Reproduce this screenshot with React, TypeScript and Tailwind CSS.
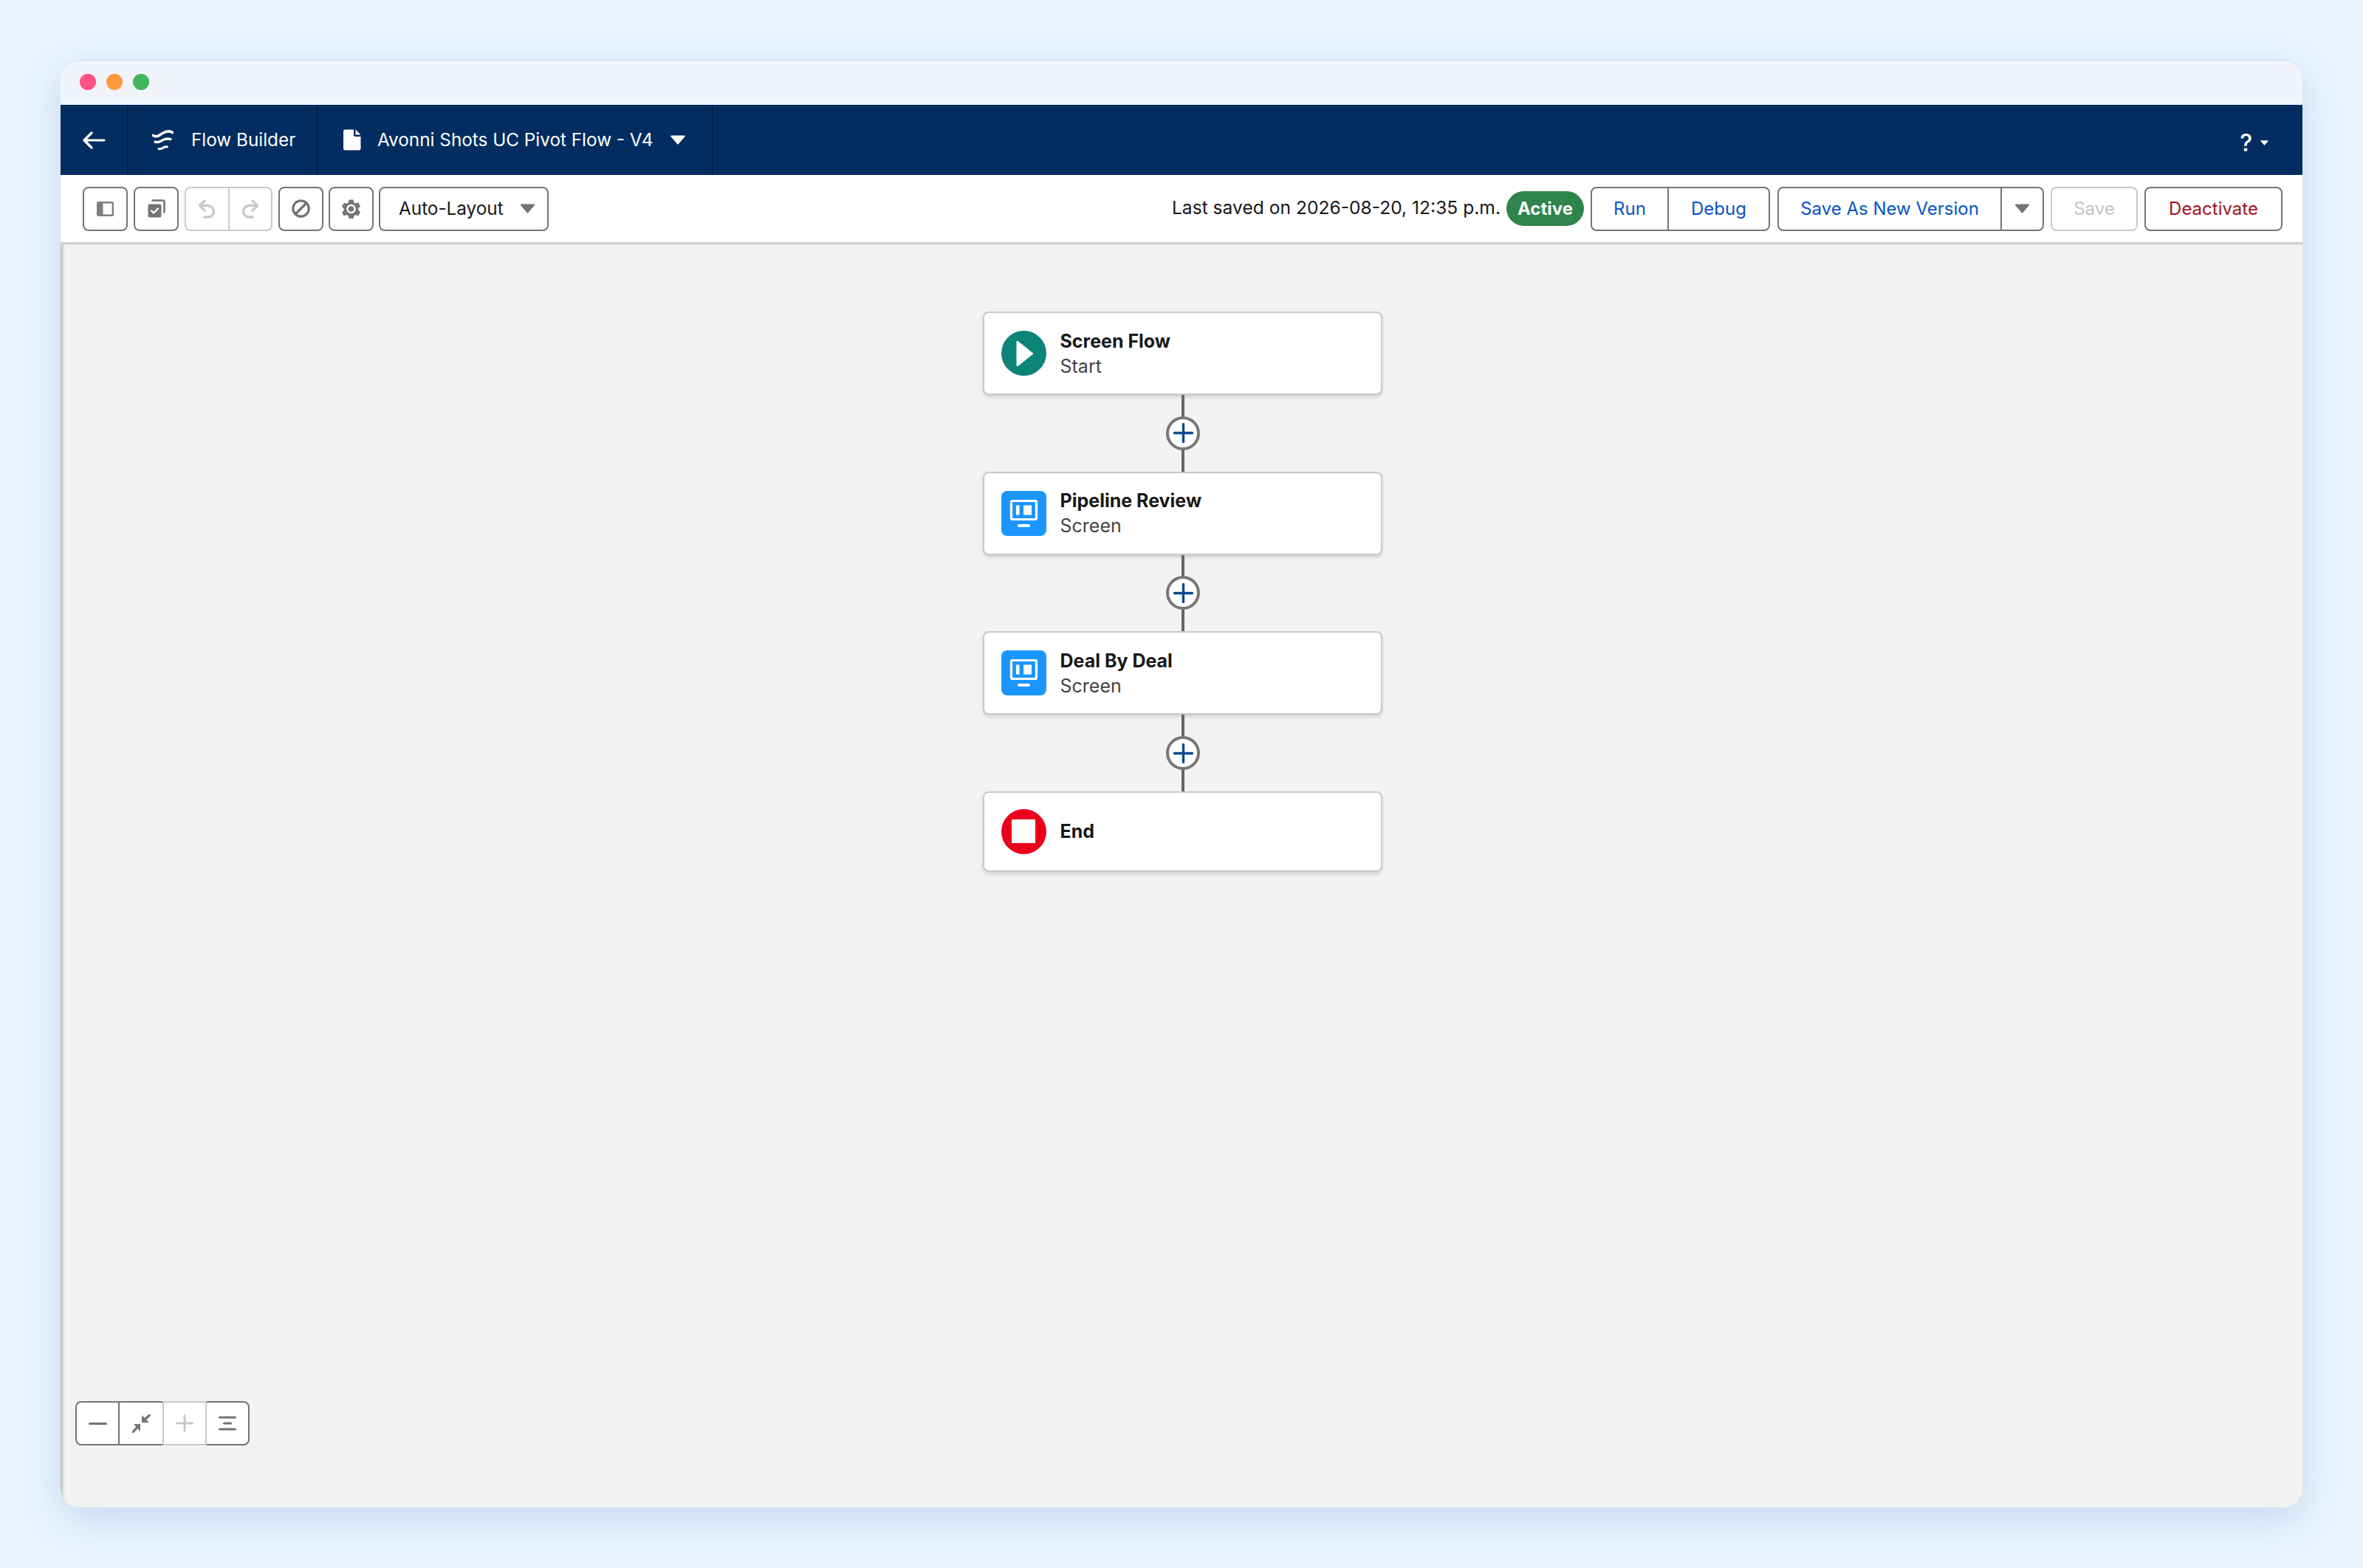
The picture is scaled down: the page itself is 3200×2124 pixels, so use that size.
const sans = "font-['Inter',sans-serif]";

function Caret({ className }: { className: string }) {
  return (
    <svg viewBox="0 0 20 13" className={className} fill="currentColor">
      <path d="M1 0.5h18a.8.8 0 0 1 .7 1.2l-9 10.6a.9.9 0 0 1-1.4 0l-9-10.6A.8.8 0 0 1 1 .5z" />
    </svg>
  );
}

function PanelIcon() {
  return (
    <svg width="23" height="20" viewBox="0 0 23 20">
      <rect x="1.2" y="1.2" width="20.6" height="17.6" rx="1" fill="#fff" stroke="#7f7f7f" strokeWidth="2.4" />
      <rect x="2" y="2" width="6.5" height="16" fill="#7f7f7f" />
    </svg>
  );
}

function CopyCheckIcon() {
  return (
    <svg width="24" height="25" viewBox="0 0 24 25">
      <path d="M6.5 1.500h14a2 2 0 0 1 2 2v14" fill="none" stroke="#747474" strokeWidth="2.600" strokeLinecap="round" />
      <rect x="0.5" y="6.500" width="18" height="18" rx="2.500" fill="#747474" />
      <path d="M5 15.500l3 3 6-6" fill="none" stroke="#fff" strokeWidth="2.400" strokeLinecap="round" strokeLinejoin="round" />
    </svg>
  );
}

function UndoIcon({ flip }: { flip?: boolean }) {
  return (
    <svg width="25" height="26" viewBox="0 0 25 26" className={flip ? "-scale-x-100" : ""}>
      <path
        d="M9 2L2.500 8.500 9 15M3.500 8.500h10a8 8 0 0 1 8 8 7.500 7.500 0 0 1-7.500 7.500H9"
        fill="none"
        stroke="#c9c9c9"
        strokeWidth="3.400"
        strokeLinecap="round"
        strokeLinejoin="round"
      />
    </svg>
  );
}

function BanIcon() {
  return (
    <svg width="25" height="25" viewBox="0 0 25 25" fill="none" stroke="#747474" strokeWidth="3.200">
      <circle cx="12.500" cy="12.500" r="10.700" />
      <path d="M20 5L5 20" strokeLinecap="round" />
    </svg>
  );
}

function GearIcon() {
  return (
    <svg width="25" height="26" viewBox="0 0 24 25">
      <path
        fill="#747474"
        stroke="#747474"
        strokeWidth="1"
        strokeLinejoin="round"
        d="M9.600.9h4.800l.8 3.300 2.700 1.500 3.200-1 2.300 4.200-2.400 2.300v3.100l2.400 2.300-2.300 4.200-3.200-1-2.700 1.500-.8 3.300H9.600l-.8-3.300-2.700-1.500-3.200 1L.6 17.100l2.400-2.300v-3.100L.6 9.400l2.300-4.200 3.200 1 2.700-1.500z"
      />
      <circle cx="12" cy="12.500" r="6" fill="#fff" />
      <circle cx="12" cy="12.500" r="3.600" fill="#747474" />
    </svg>
  );
}

function FlowIcon() {
  return (
    <svg width="29" height="29" viewBox="0 0 29 29" fill="none" stroke="#fff" strokeLinecap="round">
      <path d="M1.500 8.500C7 12 10 7.500 15 5c5-2.500 9-3 12.500-.5" strokeWidth="3.600" />
      <path d="M4 17c5 2.500 8-1.500 12-3 3-1.100 6-1.300 9-.5" strokeWidth="3.300" />
      <path d="M9 26.500c3 1 5-1 7-2 1.500-.7 3-1 4.500-.6" strokeWidth="3" />
    </svg>
  );
}

function DocIcon() {
  return (
    <svg width="24" height="29" viewBox="0 0 24 29" fill="#fff">
      <path d="M2.500.5h11.500v7a2.500 2.500 0 0 0 2.500 2.500h7v16a2.500 2.500 0 0 1-2.500 2.500h-18.500a2.500 2.500 0 0 1-2.500-2.500v-23a2.500 2.500 0 0 1 2.500-2.500z" />
      <path d="M16.500.5l7 7h-7z" />
    </svg>
  );
}

function ScreenIcon() {
  return (
    <svg width="61" height="61" viewBox="0 0 61 61">
      <rect x="13.500" y="13.500" width="34" height="25" rx="1.500" fill="none" stroke="#fff" strokeWidth="3.200" />
      <rect x="20" y="19.500" width="4.500" height="13" fill="#fff" />
      <rect x="30" y="19.500" width="11" height="13" fill="#fff" />
      <rect x="22" y="45" width="17" height="4" rx="2" fill="#fff" />
    </svg>
  );
}

function PlusButton() {
  return (
    <div className="ml-[2px] flex h-[103.67px] w-1 flex-col items-center justify-center bg-[#666666]">
      <div className="flex h-[46px] w-[46px] shrink-0 items-center justify-center rounded-full border-4 border-[#777777] bg-white">
        <svg width="27" height="27" viewBox="0 0 27 27" stroke="#0b4a8c" strokeWidth="3.400" strokeLinecap="round">
          <path d="M13.500 1.500v24M1.500 13.500h24" />
        </svg>
      </div>
    </div>
  );
}

function FlowNode({
  icon,
  title,
  sub,
  tall = true,
}: {
  icon: React.ReactNode;
  title: string;
  sub?: string;
  tall?: boolean;
}) {
  return (
    <div
      className={`flex w-[541px] items-center gap-[19px] rounded-[8px] border-2 border-[#c9c9c9] bg-white pl-[23px] shadow-[0_3px_5px_rgba(0,0,0,0.14)] ${
        tall ? "h-[113px]" : "h-[109px]"
      }`}
    >
      {icon}
      <div className="flex flex-col">
        <span className="text-[25px] leading-[34px] font-bold text-[#181818]">{title}</span>
        {sub && <span className="text-[25px] leading-[34px] text-[#444444]">{sub}</span>}
      </div>
    </div>
  );
}

function ToolButton({ children, className = "" }: { children: React.ReactNode; className?: string }) {
  return (
    <button className={`flex h-[60px] w-[61px] items-center justify-center rounded-[8px] border-2 border-[#747474] bg-white ${className}`}>
      {children}
    </button>
  );
}

export default function App() {
  return (
    <div className={`h-[2124px] w-[3200px] overflow-hidden bg-[#e9f4fe] pt-[81px] pl-[82px] ${sans}`}>
      <div className="flex h-[1961px] w-[3036px] flex-col overflow-hidden rounded-[26px] border-t-2 border-[#d8e6f6] bg-[#f3f3f3] shadow-[0_16px_50px_rgba(90,130,190,0.24)]">
        <div className="flex h-[59px] shrink-0 items-center gap-[14px] bg-[#f1f5fb] pb-[3px] pl-[26px]">
          <span className="h-[22px] w-[22px] rounded-full bg-[#ff5186]" />
          <span className="h-[22px] w-[22px] rounded-full bg-[#ff9a3c]" />
          <span className="h-[22px] w-[22px] rounded-full bg-[#40b75a]" />
        </div>

        <header className="flex h-[95px] shrink-0 items-stretch bg-[#032d60] text-white">
          <div className="flex w-[92px] items-center justify-center border-r-2 border-[#021f44]">
            <svg width="31" height="24" viewBox="0 0 31 24" fill="none" stroke="#fff" strokeWidth="3.200" strokeLinecap="round" strokeLinejoin="round">
              <path d="M12 2L2 12l10 10M3 12h26" />
            </svg>
          </div>
          <div className="flex w-[257px] items-center gap-[24px] border-r-2 border-[#021f44] pl-[32px]">
            <FlowIcon />
            <span className="text-[24.3px]">Flow Builder</span>
          </div>
          <div className="flex w-[535px] items-center border-r-2 border-[#021f44] pl-[34px]">
            <DocIcon />
            <span className="ml-[22px] text-[24.3px]">Avonni Shots UC Pivot Flow - V4</span>
            <Caret className="ml-[23px] h-[13px] w-[20px] text-white" />
          </div>
          <div className="ml-auto flex items-center gap-[11px] pt-2 pr-[46px]">
            <span className="text-[32px] leading-none font-medium">?</span>
            <Caret className="h-[7px] w-[11px] text-white" />
          </div>
        </header>

        <div className="flex h-[94px] shrink-0 items-center border-b-[3px] border-[#d0d0d0] bg-white pr-[27px] pl-[30px]">
          <div className="flex items-center gap-[8px]">
            <ToolButton>
              <PanelIcon />
            </ToolButton>
            <ToolButton>
              <CopyCheckIcon />
            </ToolButton>
            <div className="flex h-[60px] w-[119px] rounded-[8px] border-2 border-[#c9c9c9] bg-white">
              <div className="flex flex-1 items-center justify-center border-r-2 border-[#c9c9c9]">
                <UndoIcon />
              </div>
              <div className="flex flex-1 items-center justify-center">
                <UndoIcon flip />
              </div>
            </div>
            <ToolButton>
              <BanIcon />
            </ToolButton>
            <ToolButton className="-ml-[1px]">
              <GearIcon />
            </ToolButton>
            <div className="-ml-[1px] flex h-[60px] w-[230px] items-center justify-between rounded-[8px] border-2 border-[#747474] bg-white pr-[16px] pl-[25px] text-[24.3px] text-[#181818]">
              <span>Auto-Layout</span>
              <Caret className="h-[13px] w-[21px] text-[#747474]" />
            </div>
          </div>

          <div className="ml-auto flex items-center text-[24px]">
            <span className="mr-[8px] -mt-[2px] text-[24.6px] text-[#181818]">Last saved on 2026-08-20, 12:35 p.m.</span>
            <span className="mr-[9px] flex h-[47px] w-[105px] items-center justify-center rounded-full bg-[#2e844a] text-[24px] font-bold text-white">
              Active
            </span>
            <div className="mr-[10px] flex h-[60px] w-[243px] rounded-[8px] border-2 border-[#747474] bg-white text-[#0654c6]">
              <div className="flex w-[104px] items-center justify-center border-r-2 border-[#747474]">Run</div>
              <div className="flex flex-1 items-center justify-center">Debug</div>
            </div>
            <div className="mr-[9px] flex h-[60px] w-[361px] rounded-[8px] border-2 border-[#747474] bg-white text-[#0654c6]">
              <div className="flex w-[302px] items-center justify-center border-r-2 border-[#747474]">Save As New Version</div>
              <div className="flex flex-1 items-center justify-center">
                <Caret className="h-[13px] w-[21px] text-[#747474]" />
              </div>
            </div>
            <div className="mr-[9px] flex h-[60px] w-[118px] items-center justify-center rounded-[8px] border-2 border-[#c9c9c9] bg-white text-[#c4c4c4]">
              Save
            </div>
            <div className="flex h-[60px] w-[187px] items-center justify-center rounded-[8px] border-2 border-[#747474] bg-white text-[#a30f23]">
              Deactivate
            </div>
          </div>
        </div>

        <main className="relative flex-1 bg-[#f3f3f3] shadow-[inset_5px_0_4px_-2px_rgba(0,0,0,0.22)]">
          <div className="flex flex-col items-center pt-[91px] pl-[2px]">
            <FlowNode
              icon={
                <span className="flex h-[61px] w-[61px] items-center justify-center rounded-full bg-[#0d8478]">
                  <svg width="24" height="36" viewBox="0 0 24 36" fill="#fff" className="ml-[3px]">
                    <path d="M2.500 1l20 16a1.300 1.300 0 0 1 0 2l-20 16a1.300 1.300 0 0 1-2-1V2a1.300 1.300 0 0 1 2-1z" />
                  </svg>
                </span>
              }
              title="Screen Flow"
              sub="Start"
            />
            <PlusButton />
            <FlowNode
              icon={
                <span className="h-[61px] w-[61px] rounded-[8px] bg-[#1b96ff]">
                  <ScreenIcon />
                </span>
              }
              title="Pipeline Review"
              sub="Screen"
            />
            <PlusButton />
            <FlowNode
              icon={
                <span className="h-[61px] w-[61px] rounded-[8px] bg-[#1b96ff]">
                  <ScreenIcon />
                </span>
              }
              title="Deal By Deal"
              sub="Screen"
            />
            <PlusButton />
            <FlowNode
              tall={false}
              icon={
                <span className="flex h-[61px] w-[61px] items-center justify-center rounded-full bg-[#ea001e]">
                  <span className="h-[32px] w-[32px] bg-white" />
                </span>
              }
              title="End"
            />
          </div>

          <div className="absolute bottom-[84px] left-[20px] flex h-[60px] w-[236px] rounded-[8px] border-2 border-[#747474] bg-white">
            <div className="flex w-[58px] items-center justify-center border-r-2 border-[#747474]">
              <span className="h-[3px] w-[25px] rounded-full bg-[#747474]" />
            </div>
            <div className="flex w-[58px] items-center justify-center">
              <svg width="25" height="25" viewBox="0 0 25 25" fill="#747474" stroke="#747474">
                <path d="M13 1v10h10z" strokeWidth="0" />
                <path d="M18 6l5.500-5" strokeWidth="3.200" strokeLinecap="round" />
                <path d="M2 13h9v10z" strokeWidth="0" />
                <path d="M6 18.500l-5 5" strokeWidth="3.200" strokeLinecap="round" />
              </svg>
            </div>
            <div className="-my-[2px] flex w-[60px] items-center justify-center border-2 border-[#c9c9c9]">
              <svg width="24" height="24" viewBox="0 0 24 24" stroke="#c9c9c9" strokeWidth="3" strokeLinecap="round">
                <path d="M12 1.500v21M1.500 12h21" />
              </svg>
            </div>
            <div className="flex flex-1 items-center justify-center">
              <svg width="24" height="20" viewBox="0 0 24 20" stroke="#747474" strokeWidth="3" strokeLinecap="round">
                <path d="M1.500 2h21M7.500 10h9M1.500 18h21" />
              </svg>
            </div>
          </div>
        </main>
      </div>
    </div>
  );
}
